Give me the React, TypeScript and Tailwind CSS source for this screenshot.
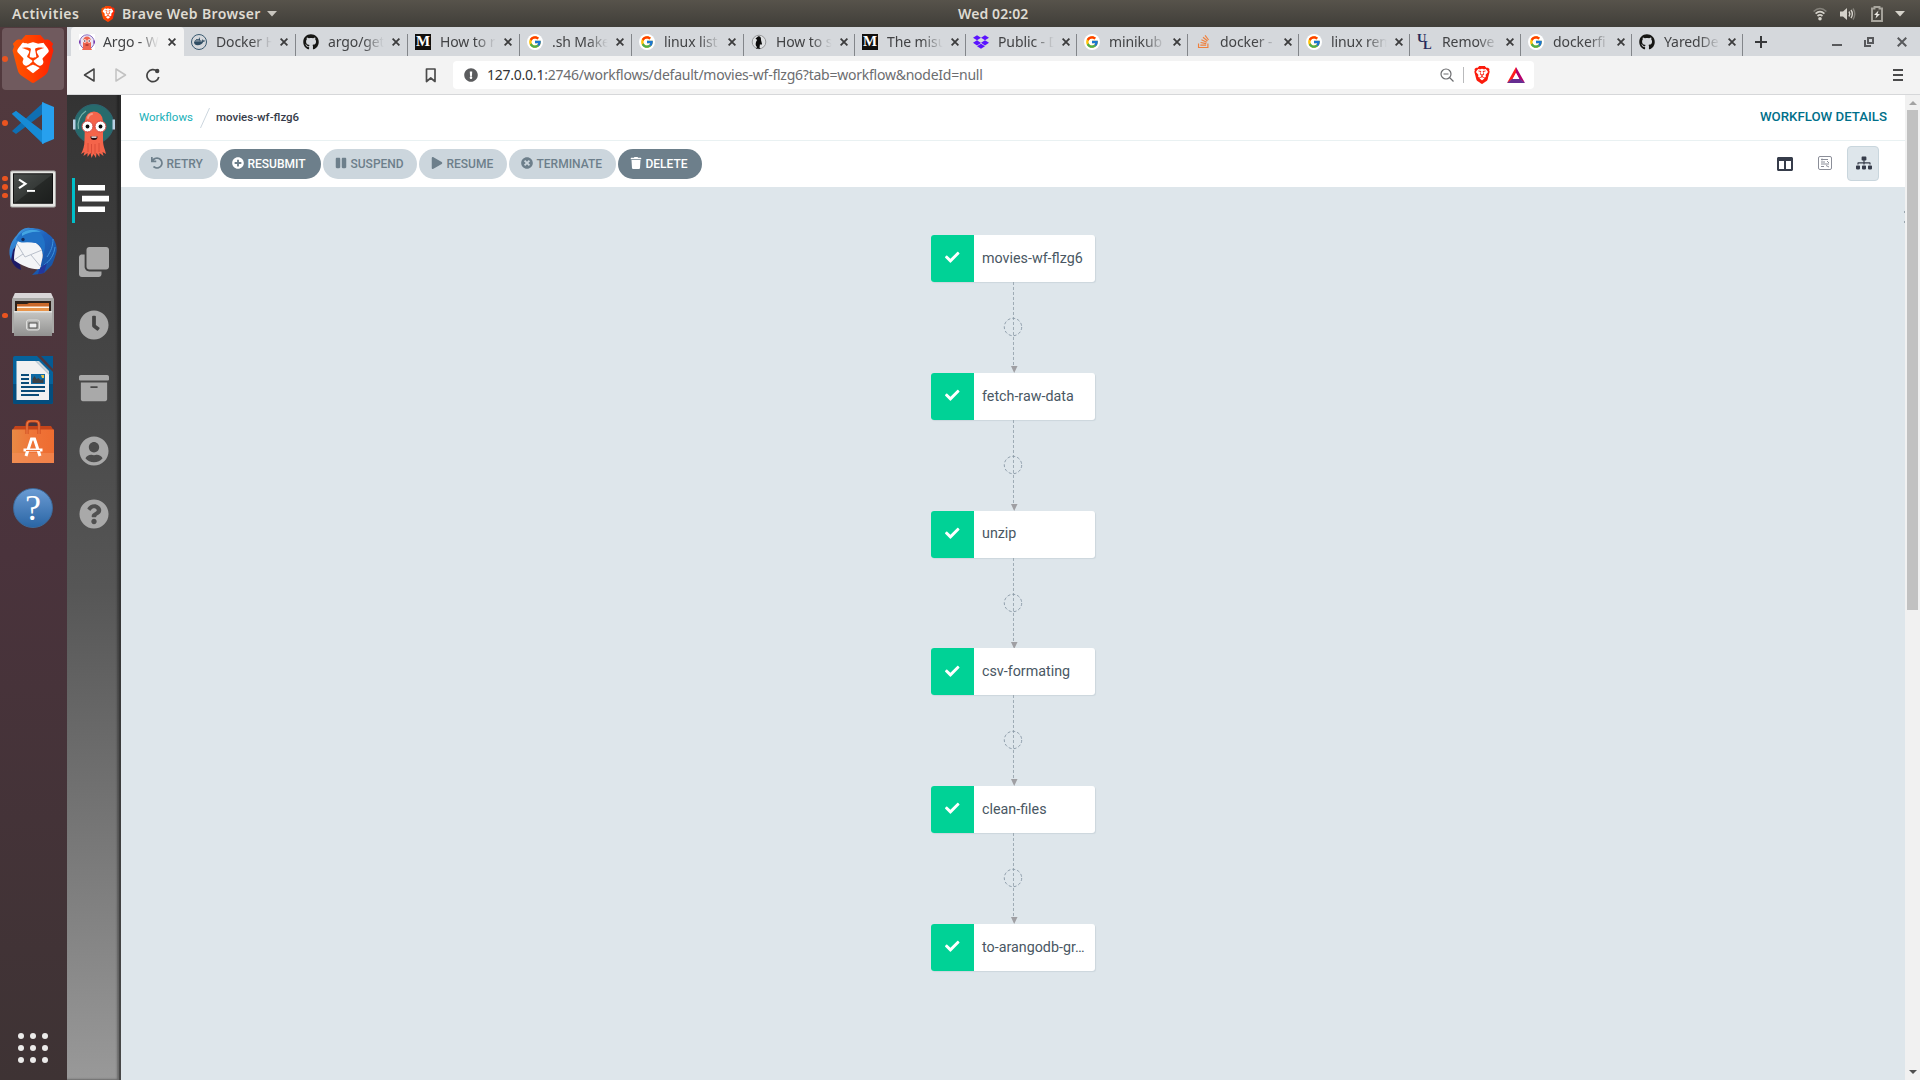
import React from "react";
import {
  FaArchive, FaCheck, FaClock, FaClone, FaColumns, FaDocker, FaDropbox, FaExclamationCircle, FaGithub,
  FaPause, FaPlay, FaPlusCircle, FaQuestionCircle, FaSitemap, FaStackOverflow, FaTimesCircle, FaTrash,
  FaUndo, FaUserCircle,
} from "react-icons/fa";
import { FcGoogle } from "react-icons/fc";
import { SiBrave } from "react-icons/si";

const BRAVE_OUTLINE =
  "M15.68 0l2.096 2.38s1.84-.512 2.709.358c.868.87 1.584 1.638 1.584 1.638l-.562 1.381.715 2.047s-2.104 7.98-2.35 8.955c-.486 1.919-.818 2.66-2.198 3.633-1.38.972-3.884 2.66-4.293 2.916-.409.256-.92.692-1.38.692-.46 0-.97-.436-1.38-.692a185.796 185.796 0 01-4.293-2.916c-1.38-.973-1.712-1.714-2.197-3.633-.247-.975-2.351-8.955-2.351-8.955l.715-2.047-.562-1.381s.716-.768 1.585-1.638c.868-.87 2.708-.358 2.708-.358L8.321 0h7.36z";

function BraveLogo({ size, flat }: { size: number; flat?: boolean }) {
  return (
    <svg width={size} height={size} viewBox="0 0 24 24" className="shrink-0">
      <defs>
        <linearGradient id="braveFill" x1="0" x2="1">
          <stop offset="0" stopColor="#ff5601" />
          <stop offset=".5" stopColor="#ff4000" />
          <stop offset="1" stopColor="#ff1f01" />
        </linearGradient>
      </defs>
      <path d={BRAVE_OUTLINE} fill="#fff" transform="translate(1.2 1.2) scale(.9)" />
      <SiBrave size={24} style={{ fill: flat ? "#fb1b0c" : "url(#braveFill)" }} />
    </svg>
  );
}

function ArgoFavicon() {
  return (
    <svg width="16" height="16" viewBox="0 0 16 16">
      <rect width="16" height="16" fill="#fff" />
      <circle cx="8" cy="8" r="7.2" fill="#e9e4f5" stroke="#8d6fc0" strokeWidth="1" />
      <path d="M4 7a4 4.500 0 018 0v7l1 2H3l1-2z" fill="#ef6450" />
      <circle cx="5.8" cy="7" r="1.8" fill="#fff" />
      <circle cx="10.2" cy="7" r="1.8" fill="#fff" />
      <circle cx="5.8" cy="7" r=".8" fill="#31203a" />
      <circle cx="10.2" cy="7" r=".8" fill="#31203a" />
      <path d="M6.5 10.5h3v1h-3z" fill="#7c1d1d" />
      <path d="M0 6.500h1.500v3H0zM14.500 6.500H16v3h-1.500z" fill="#7b3fb0" />
    </svg>
  );
}

function GoogleIcon() {
  return (
    <span className="flex size-4 items-center justify-center rounded-full bg-white">
      <FcGoogle size={14} />
    </span>
  );
}

function MediumIcon() {
  return (
    <span className="flex size-4 items-center justify-center bg-[#12100e] font-['Liberation_Serif',serif] text-[15px] leading-none font-bold text-white">
      M
    </span>
  );
}

function DockerIcon() {
  return (
    <span className="flex size-4 items-center justify-center rounded-full border-[1.500px] border-[#3a5a70] text-[#2f4d63]">
      <FaDocker size={11} />
    </span>
  );
}

function PenguinIcon() {
  return (
    <svg width="16" height="16" viewBox="0 0 16 16">
      <circle cx="8" cy="8" r="6.800" fill="#dfe1e3" stroke="#8e9092" strokeWidth=".9" />
      <path d="M4.500 4.500L7 2.500c2-.6 3.300 1 3 3.500l1 4-1 1-1-1-.5 3.500 1 1.500-3-.6L5 15l1-2c-2-1.500-1.500-5 .2-7z" fill="#0c0c0c" />
    </svg>
  );
}

function UlIcon() {
  return (
    <span className="relative block size-4 font-['Liberation_Serif',serif] text-[13px] leading-none font-bold text-[#262a5b]">
      <span className="absolute -top-[3px] left-0">U</span>
      <span className="absolute top-[4px] left-[6px]">L</span>
    </span>
  );
}

const TABS: { title: string; icon: React.ReactNode }[] = [
  { title: "Docker H", icon: <DockerIcon /> },
  { title: "argo/get", icon: <FaGithub size={16} color="#161614" /> },
  { title: "How to r", icon: <MediumIcon /> },
  { title: ".sh Make", icon: <GoogleIcon /> },
  { title: "linux list", icon: <GoogleIcon /> },
  { title: "How to s", icon: <PenguinIcon /> },
  { title: "The misu", icon: <MediumIcon /> },
  { title: "Public - D", icon: <FaDropbox size={16} color="#5b13ff" /> },
  { title: "minikub", icon: <GoogleIcon /> },
  { title: "docker -", icon: <FaStackOverflow size={15} color="#f0803c" /> },
  { title: "linux rem", icon: <GoogleIcon /> },
  { title: "Remove", icon: <UlIcon /> },
  { title: "dockerfi", icon: <GoogleIcon /> },
  { title: "YaredDe", icon: <FaGithub size={16} color="#161614" /> },
];

function Cross({ size = 8, color = "#3c3c3d", weight = 1.8 }) {
  return (
    <svg width={size} height={size} viewBox="0 0 8 8" className="shrink-0">
      <path d="M.6.6l6.800 6.800M7.400.6L.6 7.400" stroke={color} strokeWidth={weight} />
    </svg>
  );
}

function TabLabel({ children, narrow }: { children: string; narrow?: boolean }) {
  return (
    <span
      className={`${narrow ? "ml-2" : "ml-[9px]"} w-[57px] text-[14px] leading-5 tracking-[-0.1px] whitespace-nowrap text-[#424345] [mask-image:linear-gradient(to_right,black_62%,transparent_98%)]`}
    >
      {children}
    </span>
  );
}

function TopBar() {
  return (
    <div className="flex h-[27px] shrink-0 items-center bg-linear-to-b from-[#57534b] to-[#403e39] text-[14px] font-semibold text-[#dfdbd2]">
      <span className="ml-3 w-[86px] tracking-[0.5px]">Activities</span>
      <span className="ml-[2px]">
        <BraveLogo size={16} />
      </span>
      <span className="ml-[6px] w-[142px] tracking-[0.36px] whitespace-nowrap">Brave Web Browser</span>
      <svg width="10" height="6" viewBox="0 0 10 6" className="ml-[3px]">
        <path d="M0 0h10L5 5.500z" fill="#c9c6bf" />
      </svg>
      <span className="ml-[681px] w-[72px] tracking-[0.1px] whitespace-nowrap">Wed 02:02</span>
      <div className="ml-auto flex items-center pr-[15px]">
        <svg width="14" height="14" viewBox="0 0 14 14" fill="none" stroke="#d5d2ca">
          <path d="M.6 4.500Q7-1.500 13.400 4.500" strokeWidth="1.600" opacity=".4" />
          <path d="M2.600 6.700Q7 2.500 11.400 6.700M4.500 9Q7 6.800 9.500 9" strokeWidth="1.700" />
          <circle cx="7" cy="11.700" r="1.800" fill="#d5d2ca" stroke="none" />
        </svg>
        <svg width="16" height="14" viewBox="0 0 16 14" fill="none" stroke="#d5d2ca" className="ml-[13px]">
          <path d="M0 4.500h3L7 1v12L3 9.500H0z" fill="#d5d2ca" stroke="none" />
          <path d="M9 4.500q1.600 2.500 0 5M11 3q2.700 4 0 8" strokeWidth="1.400" />
          <path d="M13 1.500q3.500 5.500 0 11" strokeWidth="1.400" opacity=".4" />
        </svg>
        <svg width="12" height="16" viewBox="0 0 12 16" className="ml-[15px]">
          <path d="M1 2.500h2.500V1h5v1.500H11V15H1z" fill="none" stroke="#a9a69e" strokeWidth="1.900" />
          <path d="M7.500 4.500L3 9h2.500l-1 3.500L9 8H6.500z" fill="#e8e6e0" />
        </svg>
        <svg width="10" height="6" viewBox="0 0 10 6" className="ml-[12px]">
          <path d="M0 0h10L5 5.500z" fill="#d5d2ca" />
        </svg>
      </div>
    </div>
  );
}

function TabStrip() {
  return (
    <div className="flex h-[29px] shrink-0 items-stretch bg-[#d5d8dc] pl-1">
      <div className="flex w-[113px] items-center rounded-t bg-[#f3f3f3] pl-2">
        <ArgoFavicon />
        <TabLabel narrow>Argo - W</TabLabel>
        <span className="ml-2">
          <Cross />
        </span>
      </div>
      {TABS.map((tab, i) => (
        <div key={tab.title} className={`relative flex items-center pl-[7px] ${i < 5 ? "w-[112px]" : "w-[111px]"}`}>
          <span className="flex w-4 shrink-0 justify-center">{tab.icon}</span>
          <TabLabel>{tab.title}</TabLabel>
          <span className="ml-[7px]">
            <Cross />
          </span>
          {i > 0 && <span className="absolute bottom-0 -left-px h-[22px] w-px bg-[#83868a]" />}
        </div>
      ))}
      <span className="-ml-px h-[22px] w-px self-end bg-[#83868a]" />
      <svg width="12" height="12" viewBox="0 0 12 12" className="ml-[12px] self-center">
        <path d="M6 0v12M0 6h12" stroke="#37383a" strokeWidth="2" />
      </svg>
      <div className="ml-auto flex items-center pr-[13px]">
        <span className="mt-[7px] h-[2px] w-[10px] bg-[#58595c]" />
        <svg width="10" height="10" viewBox="0 0 10 10" className="ml-[22px]" fill="none" stroke="#58595c" strokeWidth="2">
          <path d="M4 1h5v5H4z" />
          <path d="M1 3v6h6" />
        </svg>
        <span className="ml-[23px]">
          <Cross size={10} color="#58595c" weight={1.6} />
        </span>
      </div>
    </div>
  );
}

function Toolbar() {
  return (
    <div className="flex h-[39px] shrink-0 items-center border-b border-[#d6d7d9] bg-[#f3f3f3]">
      <svg width="80" height="16" viewBox="0 0 80 16" fill="none" className="ml-4">
        <path d="M11 2L1.500 8l9.500 6z" stroke="#424242" strokeWidth="1.500" strokeLinejoin="round" />
        <path d="M33 2l9.500 6-9.500 6z" stroke="#c2c2c2" strokeWidth="1.500" strokeLinejoin="round" />
        <path d="M74 4.200A6 6 0 1075.800 10" stroke="#424242" strokeWidth="1.700" />
        <circle cx="74.200" cy="4" r="2.200" fill="#424242" />
      </svg>
      <svg width="12" height="15" viewBox="0 0 12 15" fill="none" className="ml-[262px]">
        <path d="M1.500 1h8.500v12.500L5.750 10 1.500 13.500z" stroke="#4b4b4b" strokeWidth="1.700" strokeLinejoin="round" />
      </svg>
      <div className="ml-[16px] flex h-7 w-[1081px] items-center rounded bg-white pl-[11px]">
        <FaExclamationCircle size={14} color="#5b5c5e" />
        <span className="-mt-[2px] ml-[9px] text-[14px] tracking-[-0.24px] whitespace-nowrap text-[#6c6d70]">
          <span className="text-[#333436]">127.0.0.1</span>:2746/workflows/default/movies-wf-flzg6?tab=workflow&amp;nodeId=null
        </span>
        <div className="ml-auto flex items-center pr-[9px]">
          <svg width="14" height="14" viewBox="0 0 14 14" fill="none" stroke="#6c6d70">
            <circle cx="6" cy="6" r="5" strokeWidth="1.200" />
            <path d="M3.500 6h5M9.500 9.500l4 4" strokeWidth="1.200" />
          </svg>
          <span className="ml-[9px] h-4 w-px bg-[#b9babc]" />
          <span className="ml-[9px]">
            <BraveLogo size={18} flat />
          </span>
          <svg width="18" height="16" viewBox="0 0 18 16" className="ml-4">
            <path d="M9 0L0 16l6-4 3-6z" fill="#ff1d1d" />
            <path d="M9 0l9 16-6-4-3-6z" fill="#b5006b" />
            <path d="M0 16h18l-5-4H5z" fill="#662d91" />
            <path d="M9 6l3.400 6H5.600z" fill="#fff" />
          </svg>
        </div>
      </div>
      <div className="mr-[17px] ml-auto flex w-[10px] flex-col gap-[3px]">
        <span className="h-[2px] bg-[#4a4a4b]" />
        <span className="h-[2px] bg-[#4a4a4b]" />
        <span className="h-[2px] bg-[#4a4a4b]" />
      </div>
    </div>
  );
}

function VsCodeLogo() {
  return (
    <svg width="44" height="44" viewBox="0 0 44 44">
      <path d="M1 12.500L5 10l27 21v12z" fill="#0f7fca" />
      <path d="M1 30l4 3L33 12V1z" fill="#0f6fb3" />
      <path d="M1 13l4-3 28 21v12L22 33z" fill="#168bd6" />
      <path d="M31 1l12 5v32l-12 5z" fill="#27a0ee" />
    </svg>
  );
}

function TerminalIcon() {
  return (
    <svg width="46" height="38" viewBox="0 0 46 40" preserveAspectRatio="none" className="mt-[3px]">
      <defs>
        <linearGradient id="screen" x1="0" x2="1" y1="0" y2="1">
          <stop offset="0" stopColor="#4b4f4d" />
          <stop offset=".5" stopColor="#363a38" />
          <stop offset=".52" stopColor="#262927" />
          <stop offset="1" stopColor="#1c1e1d" />
        </linearGradient>
      </defs>
      <rect x=".5" y="1" width="45" height="38" rx="1.500" fill="#e6e6e3" stroke="#a6a6a3" />
      <rect x="3.500" y="4" width="39" height="31" fill="url(#screen)" stroke="#111" />
      <path d="M9 10l6.500 4.500L9 19" fill="none" stroke="#fff" strokeWidth="2.200" />
      <path d="M17 22h8" stroke="#fff" strokeWidth="2" />
    </svg>
  );
}

function ThunderbirdIcon() {
  return (
    <svg width="48" height="48" viewBox="0 0 48 48">
      <defs>
        <linearGradient id="bird" x1="0" x2="1" y1="0" y2="1">
          <stop offset="0" stopColor="#4aa8e8" />
          <stop offset=".45" stopColor="#1f62bd" />
          <stop offset="1" stopColor="#16519f" />
        </linearGradient>
      </defs>
      <path d="M3 14C1 22-1 34 8 41l4 2-1-6z" fill="#1d1a66" />
      <path d="M8 8C11 3 16 0 21 1c8 0 14 2 18 6 8 5 10 14 8 20l-2 6-2 5-4 4-4 4-5 1-7 1 8-8 3-12-4-10-20-3-6 8-2 10C-1 26 0 16 8 8z" fill="url(#bird)" />
      <path d="M9 14l18 2c6 4 8 10 6 17l-2 9c-8 1-18-3-26-9 0-7 1-13 4-19z" fill="#f4f5f7" />
      <path d="M8 17l8 13 17-7M5 33l9-6M22 28l10 12" fill="none" stroke="#b9bfca" strokeWidth="1" />
      <path d="M7 13c3-8 12-12 21-10 8 6 10 15 6 25 0-8-4-12-11-13-6 0-11 2-16-2z" fill="#2172c6" />
      <path d="M13 6c6-4 13-4 19-1-8-1-14 1-19 4z" fill="#43a5e2" />
      <path d="M46 20c-1 8-5 14-11 18M44 12c0 7-2 12-6 18" fill="none" stroke="#3f93dd" />
      <circle cx="14" cy="12.500" r="1.700" fill="#142a5c" />
      <path d="M31 41l7-5-3 10-6 1z" fill="#23379d" />
    </svg>
  );
}

function FilesIcon() {
  return (
    <svg width="42" height="44" viewBox="0 0 42 44">
      <defs>
        <linearGradient id="drawer" x1="0" x2="0" y1="0" y2="1">
          <stop offset="0" stopColor="#c7c7c5" />
          <stop offset="1" stopColor="#919190" />
        </linearGradient>
      </defs>
      <path d="M3 0h36l3 6v34H0V6z" fill="#a9a9a7" />
      <path d="M3 0h36l2 5H1z" fill="#d9d6d8" />
      <path d="M3 8h36v11H3z" fill="#2c211a" />
      <path d="M5 11h10l2-1h20v8H5z" fill="#c9682a" />
      <path d="M5 13.500h32v1.500H5z" fill="#fff3e6" />
      <path d="M5 15h32v4H5z" fill="#e8944a" />
      <path d="M2 18h38v25H2z" fill="url(#drawer)" />
      <path d="M2 18h38v1.500H2z" fill="#e3e3e1" />
      <rect x="14.500" y="27" width="13" height="10" rx="2" fill="#b5b5b3" stroke="#dededc" />
      <rect x="17" y="30" width="8" height="5" fill="#eee" stroke="#4c4c4a" />
    </svg>
  );
}

function WriterIcon() {
  return (
    <svg width="40" height="48" viewBox="0 0 40 48">
      <path d="M2 0h22l16 16v30a2 2 0 01-2 2H2a2 2 0 01-2-2V2a2 2 0 012-2z" fill="#05629b" />
      <path d="M0 28h40v18a2 2 0 01-2 2H2a2 2 0 01-2-2z" fill="#044d7d" />
      <path d="M28 0h12v13z" fill="#045a93" />
      <path d="M3.500 5h19L36 18.500V44H3.500z" fill="#f1f1f1" />
      <path d="M22.500 5L36 18.500V15L26 5z" fill="#cfd6db" />
      <path d="M8 19h8M8 23h8M8 27h8M8 31h24M8 35h24M8 39h18" transform="translate(0 0)" stroke="#0b4c78" strokeWidth="1.900" fill="none" />
      <rect x="18" y="18" width="14" height="10" fill="#0e6aa5" />
      <path d="M19.500 27v-4l2-3 2 3 2-1 2 2 3-1v4z" fill="#3d4144" />
      <path d="M28 19h3v3h-2z" fill="#e8c44a" />
    </svg>
  );
}

function SoftwareIcon() {
  return (
    <svg width="42" height="46" viewBox="0 0 42 46" className="mt-[-2px]">
      <defs>
        <linearGradient id="bag" x1="0" x2="1">
          <stop offset="0" stopColor="#e88a45" />
          <stop offset=".5" stopColor="#ef7438" />
          <stop offset="1" stopColor="#ee6c30" />
        </linearGradient>
      </defs>
      <path d="M3 6h36l3 5v7H0v-7z" fill="#c4441a" />
      <path d="M0 9.500h42V43H0z" fill="url(#bag)" />
      <path d="M0 33h42v10H0z" fill="#f4905a" opacity=".6" />
      <path d="M15 14V5q0-4 4-4h4q4 0 4 4v9" fill="none" stroke="#c9481d" strokeWidth="3" />
      <path d="M15 14V5q0-4 4-4h4q4 0 4 4v9" fill="none" stroke="#f08049" strokeWidth="1.200" />
      <path d="M14 36l5.500-17h3L28 36M11.500 30h19" fill="none" stroke="#fff" strokeWidth="3" />
      <path d="M14 30.500h14" stroke="#ef7438" strokeWidth="1.100" />
    </svg>
  );
}

function HelpIcon() {
  return (
    <span className="flex size-10 items-center justify-center rounded-full border border-[#3d6b9c] bg-linear-to-b from-[#6a9bd3] to-[#2a66a5] font-['Liberation_Serif',serif] text-[36px] leading-none text-white">
      ?
    </span>
  );
}

const DOCK: { name: string; icon: React.ReactNode; dots: number; active?: boolean }[] = [
  { name: "brave", icon: <BraveLogo size={48} />, dots: 1, active: true },
  { name: "code", icon: <VsCodeLogo />, dots: 1 },
  { name: "terminal", icon: <TerminalIcon />, dots: 3 },
  { name: "thunderbird", icon: <ThunderbirdIcon />, dots: 0 },
  { name: "files", icon: <FilesIcon />, dots: 1 },
  { name: "writer", icon: <WriterIcon />, dots: 0 },
  { name: "software", icon: <SoftwareIcon />, dots: 0 },
  { name: "help", icon: <HelpIcon />, dots: 0 },
];

function Dock() {
  return (
    <div className="flex w-[67px] shrink-0 flex-col bg-linear-to-b from-[#523a3e] via-[#4a333c] to-[#3e3334]">
      {DOCK.map((item) => (
        <div key={item.name} className="relative flex h-[64.1px] items-center pl-[2px]">
          <div className={`flex h-[62px] w-[62px] items-center justify-center rounded ${item.active ? "bg-[#705a5e]" : ""}`}>
            {item.icon}
          </div>
          <div className="absolute inset-y-0 left-[2px] flex flex-col justify-center gap-[3px]">
            {Array.from({ length: item.dots }, (_, i) => (
              <span key={i} className="size-[5.500px] rounded-full bg-[#ea5420]" />
            ))}
          </div>
        </div>
      ))}
      <div className="mt-auto mb-[17px] ml-[18px] grid w-[30px] grid-cols-3 gap-[6px]">
        {Array.from({ length: 9 }, (_, i) => (
          <span key={i} className="size-[6px] rounded-full bg-[#ecebea]" />
        ))}
      </div>
    </div>
  );
}

function ArgoLogo() {
  return (
    <svg width="42" height="54" viewBox="0 0 42 54" className="ml-[2px]">
      <circle cx="21" cy="20" r="19.500" fill="#276b6c" stroke="#2f6270" />
      <path d="M5.500 25A17 17 0 0113 7" fill="none" stroke="#78b1a9" strokeWidth="1.200" />
      <path d="M0 15.500h2.500v10H0zM39.500 15.500H42v10h-2.500z" fill="#b9d0e4" />
      <path
        d="M12 17a9 9.500 0 0118 0v19c0 6 2 9 3 14l-3.500-2 1 4-4-3v4l-3-4-.5 5-2.500-4-2 4-1-5-3 4v-4l-4 3 1-4-3.500 2c2-4 3.500-8 3.500-14z"
        fill="#f4644a"
      />
      <path d="M15 39v9M18.500 40v10M22 40v10M26 39v9" stroke="#d84a37" strokeWidth=".9" />
      <path d="M15 14c0-2 2-4 4-4" fill="none" stroke="#f99b87" strokeWidth="2" strokeLinecap="round" />
      <circle cx="14.500" cy="22.500" r="5.500" fill="#fff" stroke="#d43f3a" />
      <circle cx="27.500" cy="22.500" r="5.500" fill="#fff" stroke="#d43f3a" />
      <circle cx="14.500" cy="22.500" r="1.900" fill="#0b0b0b" />
      <circle cx="27.500" cy="22.500" r="1.900" fill="#0b0b0b" />
      <path d="M17.500 32.500h7a3.500 3.500 0 01-7 0z" fill="#260d12" />
      <path d="M18.500 32.500h5v1.300h-5z" fill="#fff" />
    </svg>
  );
}

function Sidebar() {
  return (
    <div className="flex w-[54px] shrink-0 flex-col items-center border-r-2 border-[#262626]/70 bg-linear-to-b from-[#333333] via-[#565656] to-[#999999] pt-[9px] text-[#a9a9a9] shadow-[inset_-2px_-1px_2px_rgba(0,0,0,0.3)]">
      <ArgoLogo />
      <div className="mt-5 ml-[10px] flex h-[45px] w-full items-start border-l-[3px] border-[#00bfc9] pt-[7px] pl-[2px]">
        <svg width="32" height="28" viewBox="0 0 32 28" className="shrink-0">
          <path d="M1 0h27v5.600H1zM5 10.800h27v5.600H5zM1 21.400h27v5.600H1z" fill="#fff" />
        </svg>
      </div>
      <div className="mt-6 ml-[2px] flex flex-col gap-[33px]">
        <FaClone size={30} />
        <FaClock size={30} />
        <FaArchive size={30} />
        <FaUserCircle size={30} />
        <FaQuestionCircle size={30} />
      </div>
    </div>
  );
}

const ACTIONS = [
  { label: "RETRY", Icon: FaUndo, enabled: false, width: "w-[79px]" },
  { label: "RESUBMIT", Icon: FaPlusCircle, enabled: true, width: "w-[101px]" },
  { label: "SUSPEND", Icon: FaPause, enabled: false, width: "w-[94px]" },
  { label: "RESUME", Icon: FaPlay, enabled: false, width: "w-[88px]" },
  { label: "TERMINATE", Icon: FaTimesCircle, enabled: false, width: "w-[107px]" },
  { label: "DELETE", Icon: FaTrash, enabled: true, width: "w-[84px]" },
];

const NODES = ["movies-wf-flzg6", "fetch-raw-data", "unzip", "csv-formating", "clean-files", "to-arangodb-gr…"];

function Connector() {
  return (
    <svg width="20" height="90.8" viewBox="0 0 20 90.8" fill="none" className="block">
      <path d="M10.500 0v86" stroke="#9eabb5" strokeDasharray="3 2" />
      <circle cx="10" cy="45" r="8.700" stroke="#8796a4" strokeWidth=".9" strokeDasharray="3 2" />
      <path d="M8 84h6.500L11.200 91z" fill="#9f9fa3" />
    </svg>
  );
}

function WorkflowPage() {
  return (
    <div className="flex min-w-0 flex-1 flex-col bg-[#dee6eb] font-['Roboto',sans-serif]">
      <div className="flex h-[46px] shrink-0 items-center border-b border-[#e9f1f2] bg-white pr-[18px] pl-[18px] text-[11.500px]">
        <span className="w-[54px] whitespace-nowrap text-[#18b0b8]">Workflows</span>
        <svg width="10" height="20" viewBox="0 0 10 20" className="ml-[7px]">
          <path d="M9.500 0L.5 20" stroke="#ccd6de" fill="none" />
        </svg>
        <span className="ml-[6px] font-medium text-[#363c4a]">movies-wf-flzg6</span>
        <span className="-mt-[2px] ml-auto text-[13.250px] font-medium text-[#006f8a]">WORKFLOW DETAILS</span>
      </div>
      <div className="flex h-[46px] shrink-0 items-center bg-white pr-[26px] pl-[18px]">
        <div className="flex gap-[2px]">
          {ACTIONS.map(({ label, Icon, enabled, width }) => (
            <span
              key={label}
              className={`${width} flex h-[30px] items-center rounded-full pl-[11.500px] text-[12px] font-medium ${
                enabled ? "bg-[#6d7f8b] text-white" : "bg-[#ccd6dd] text-[#6d7f8b]"
              }`}
            >
              <Icon size={12} className="-mt-[2px] mr-[4px] shrink-0" />
              <span className="-mt-px">{label}</span>
            </span>
          ))}
        </div>
        <div className="ml-auto flex items-center text-[#363c4a]">
          <FaColumns size={16} className="-mt-px" />
          <svg width="14" height="14" viewBox="0 0 14 14" fill="none" stroke="#8b8e98" className="-mt-[3px] ml-[25px]">
            <rect x=".5" y=".5" width="13" height="13" rx="1.500" />
            <path d="M3 3.500h7M3 6h4M9 5l2 2M3 8h8M3 10.500h3M8 9.500l3 1.500M4 2.500v2" />
          </svg>
          <span className="-mt-px ml-[15px] flex h-[35px] w-8 items-center justify-center rounded border border-[#c9d6dd] bg-[#dee6eb] pb-[2px] pl-[2px]">
            <FaSitemap size={16} />
          </span>
        </div>
      </div>
      <div className="relative flex flex-1 flex-col items-center pt-12">
        {NODES.map((name, i) => (
          <React.Fragment key={name}>
            {i > 0 && <Connector />}
            <div className="flex h-[47px] w-[164px] shrink-0 overflow-hidden rounded-[3px] bg-white shadow-[1px_1px_1px_#ccd6dd]">
              <span className="flex w-[43px] items-center justify-center bg-[#00d296] pb-[2px] text-white">
                <FaCheck size={14.500} />
              </span>
              <span className="flex items-center pl-[8px] text-[14.300px] whitespace-nowrap text-[#495763]">{name}</span>
            </div>
          </React.Fragment>
        ))}
        <div className="absolute top-[24px] right-0 flex flex-col gap-2">
          <span className="h-[2px] w-px bg-[#9aa6ae]" />
          <span className="h-[2px] w-px bg-[#9aa6ae]" />
        </div>
      </div>
    </div>
  );
}

function Scrollbar() {
  return (
    <div className="flex w-[15px] shrink-0 flex-col items-center bg-[#f1f1f1]">
      <svg width="8" height="4" viewBox="0 0 8 4" className="mt-[6px]">
        <path d="M0 4l4-4 4 4z" fill="#a3a3a3" />
      </svg>
      <span className="mt-[5px] h-[500px] w-[11px] bg-[#c1c1c1]" />
      <svg width="8" height="4" viewBox="0 0 8 4" className="mt-auto mb-[6px]">
        <path d="M0 0l4 4 4-4z" fill="#505050" />
      </svg>
    </div>
  );
}

export default function App() {
  return (
    <div className="flex h-[1080px] w-[1920px] flex-col overflow-hidden bg-white font-['Noto_Sans',sans-serif]">
      <TopBar />
      <div className="flex min-h-0 flex-1">
        <Dock />
        <div className="flex min-w-0 flex-1 flex-col">
          <TabStrip />
          <Toolbar />
          <div className="flex min-h-0 flex-1">
            <Sidebar />
            <WorkflowPage />
            <Scrollbar />
          </div>
        </div>
      </div>
    </div>
  );
}
